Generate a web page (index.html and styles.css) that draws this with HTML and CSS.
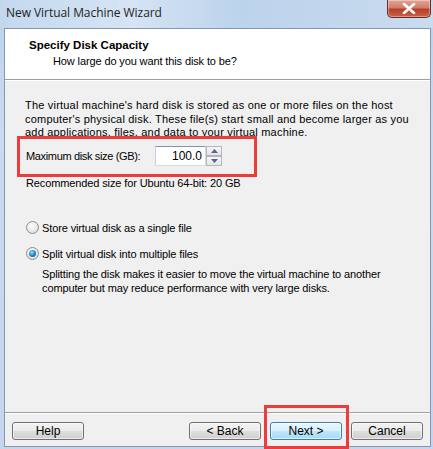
FILE: index.html
```html
<!DOCTYPE html>
<html>
<head>
<meta charset="utf-8">
<link rel="stylesheet" href="styles.css">
</head>
<body>
<div class="window">
  <div class="titlebar">
    <span class="title">New Virtual Machine Wizard</span>
    <span class="close"><svg width="14" height="11" viewBox="0 0 14 11"><path d="M2 1 L12 10 M12 1 L2 10" stroke="#fff" stroke-width="2.6" stroke-linecap="round"/></svg></span>
  </div>
  <div class="client">
    <div class="header">
      <div class="h-title">Specify Disk Capacity</div>
      <div class="h-sub">How large do you want this disk to be?</div>
    </div>
    <div class="body">
      <p class="para">The virtual machine's hard disk is stored as one or more files on the host computer's physical disk. These file(s) start small and become larger as you add applications, files, and data to your virtual machine.</p>
      <div class="size-row">
        <span class="size-label">Maximum disk size (GB):</span>
        <span class="spinner">
          <span class="spin-input">100.0</span>
          <span class="spin-btns">
            <span class="spin-btn"><svg width="7" height="4" viewBox="0 0 7 4"><path d="M0 4 L3.5 0 L7 4 Z" fill="#4a6a9c"/></svg></span>
            <span class="spin-btn"><svg width="7" height="4" viewBox="0 0 7 4"><path d="M0 0 L3.5 4 L7 0 Z" fill="#4a6a9c"/></svg></span>
          </span>
        </span>
      </div>
      <div class="recommend">Recommended size for Ubuntu 64-bit: 20 GB</div>
      <div class="radio-row first"><span class="radio"></span><span>Store virtual disk as a single file</span></div>
      <div class="radio-row second"><span class="radio checked"></span><span>Split virtual disk into multiple files</span></div>
      <p class="desc">Splitting the disk makes it easier to move the virtual machine to another computer but may reduce performance with very large disks.</p>
    </div>
    <div class="footer">
      <span class="btn">Help</span>
      <span class="spacer"></span>
      <span class="btn">&lt; Back</span>
      <span class="btn default">Next &gt;</span>
      <span class="btn">Cancel</span>
    </div>
  </div>
  <div class="mark mark-size"></div>
  <div class="mark mark-next"></div>
</div>
</body>
</html>
```
FILE: styles.css
```css
html, body {
  margin: 0;
  padding: 0;
}
body {
  width: 433px;
  height: 449px;
  overflow: hidden;
  font-family: "Liberation Sans", Arial, sans-serif;
  font-size: 11px;
  letter-spacing: -0.12px;
  color: #000;
}
.window {
  position: relative;
  width: 433px;
  height: 449px;
  box-sizing: border-box;
  display: flex;
  flex-direction: column;
  background: linear-gradient(to bottom, #bcd2ec 0%, #c9dbf0 30%, #c3d6ee 100%);
}
.titlebar {
  position: relative;
  height: 28px;
  flex: none;
  background: linear-gradient(to right, #c3d8ef 0%, #d6e4f4 30%, #bcd3ec 55%, #c9dbef 100%);
}
.title {
  position: absolute;
  left: 6px;
  top: 4px;
  font-family: "Open Sans", "Liberation Sans", sans-serif;
  font-size: 12px;
  color: #1e1e1e;
  letter-spacing: -0.05px;
}
.close {
  position: absolute;
  right: 2px;
  top: 0;
  width: 44px;
  height: 18px;
  box-sizing: border-box;
  border: 1px solid #6d2b24;
  border-top: none;
  border-radius: 0 0 5px 5px;
  background: linear-gradient(to bottom, #e0a598 0%, #d27c6b 45%, #b8402b 55%, #c8614a 100%);
  display: flex;
  align-items: center;
  justify-content: center;
  box-shadow: inset 0 0 0 1px rgba(255,255,255,0.35);
}
.client {
  flex: 1;
  margin: 0 2px 2px 4px;
  border: 1px solid #8596ad;
  background: #f0f0f0;
  display: flex;
  flex-direction: column;
}
.header {
  height: 51px;
  flex: none;
  background: #fff;
  border-bottom: 1px solid #a0a0a0;
  box-shadow: 0 1px 0 #fff;
  box-sizing: border-box;
}
.h-title {
  font-weight: bold;
  font-size: 11.5px;
  letter-spacing: 0;
  margin: 9px 0 0 24px;
  line-height: 14px;
}
.h-sub {
  margin: 2px 0 0 48px;
  line-height: 14px;
}
.body {
  flex: 1;
  padding: 19px 20px 0 20px;
}
.para {
  margin: 0;
  line-height: 13.5px;
  width: 400px;
  letter-spacing: 0.2px;
}
.size-row {
  display: flex;
  align-items: center;
  margin-top: 6px;
  height: 20px;
}
.size-label {
  width: 129px;
  padding-left: 1px;
  letter-spacing: -0.35px;
}
.spinner {
  display: flex;
  height: 20px;
}
.spin-input {
  width: 51px;
  box-sizing: border-box;
  height: 20px;
  border: 1px solid #abadb3;
  border-top-color: #7c93b4;
  border-left-color: #c4d0df;
  border-bottom-color: #c8e0f0;
  border-right-color: #d2dbe6;
  background: #fff;
  text-align: right;
  padding-right: 3px;
  line-height: 18px;
  font-size: 12px;
  letter-spacing: 0;
}
.spin-btns {
  display: flex;
  flex-direction: column;
  width: 16px;
  height: 20px;
}
.spin-btn {
  flex: 1;
  box-sizing: border-box;
  border: 1px solid #b6b6b6;
  background: linear-gradient(#f7f7f7, #e6e6e6);
  display: flex;
  align-items: center;
  justify-content: center;
}
.recommend {
  margin-top: 11px;
  padding-left: 1px;
  line-height: 13px;
}
.radio-row {
  display: flex;
  align-items: center;
  height: 14px;
  padding-left: 1px;
}
.radio-row.first {
  margin-top: 31px;
}
.radio-row.second {
  margin-top: 12px;
}
.radio {
  width: 13px;
  height: 13px;
  box-sizing: border-box;
  border-radius: 50%;
  border: 1px solid #8f8f8f;
  background: radial-gradient(circle at 40% 35%, #fdfdfd 0%, #e6e6e6 60%, #cfcfcf 100%);
  margin-right: 3px;
  flex: none;
  position: relative;
}
.radio.checked::after {
  content: "";
  position: absolute;
  left: 2px;
  top: 2px;
  width: 7px;
  height: 7px;
  border-radius: 50%;
  background: radial-gradient(circle at 40% 35%, #9de3ff 0%, #2a8dcf 45%, #0c4f86 100%);
}
.desc {
  margin: 6px 0 0 17px;
  line-height: 14.5px;
  width: 380px;
}
.footer {
  height: 34px;
  flex: none;
  border-top: 1px solid #a0a0a0;
  box-shadow: inset 0 1px 0 #fff;
  display: flex;
  align-items: center;
  padding: 0 7px 0 7px;
  gap: 9px;
  box-sizing: border-box;
}
.spacer {
  flex: 1;
}
.btn {
  width: 72px;
  height: 18px;
  box-sizing: border-box;
  border: 1px solid #707070;
  border-radius: 3px;
  background: linear-gradient(to bottom, #f2f2f2 0%, #ebebeb 50%, #dddddd 51%, #cfcfcf 100%);
  box-shadow: inset 0 0 0 1px rgba(255,255,255,0.6);
  display: flex;
  align-items: center;
  justify-content: center;
  font-size: 12px;
  letter-spacing: 0;
  margin-top: 3px;
}
.btn.default {
  border-color: #3c7fb1;
  background: linear-gradient(to bottom, #eaf6fd 0%, #d9f0fc 50%, #bee6fd 51%, #a7d9f5 100%);
}
.mark {
  position: absolute;
  border: 3px solid #ee3b3b;
  box-sizing: border-box;
}
.mark-size {
  left: 17px;
  top: 136px;
  width: 240px;
  height: 41px;
}
.mark-next {
  left: 264px;
  top: 405px;
  width: 85px;
  height: 44px;
}
```
